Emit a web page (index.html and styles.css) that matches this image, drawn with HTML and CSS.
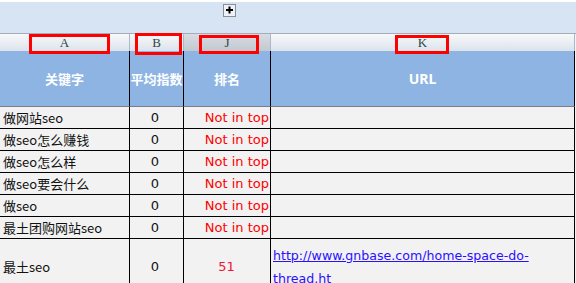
FILE: index.html
```html
<!DOCTYPE html>
<html lang="zh">
<head>
<meta charset="utf-8">
<title>关键字排名</title>
<link rel="stylesheet" href="styles.css">
</head>
<body>
<div class="sheet">
  <div class="band">
    <div></div><div></div>
    <div class="band-j">
      <svg class="expander" width="13" height="13" viewBox="0 0 13 13">
        <rect x="0.5" y="0.5" width="12" height="12" fill="#eef2f8" stroke="#8a8f96"/>
        <rect x="3" y="5" width="7" height="2" fill="#000"/>
        <rect x="5.5" y="2.5" width="2" height="7" fill="#000"/>
      </svg>
    </div>
    <div></div>
  </div>
  <div class="colheads">
    <div class="ch">A</div>
    <div class="ch">B</div>
    <div class="ch sel">J</div>
    <div class="ch">K</div>
  </div>
  <div class="grid">
    <div class="th">关键字</div>
    <div class="th">平均指数</div>
    <div class="th">排名</div>
    <div class="th th-url">URL</div>

    <div class="td kw">做网站seo</div>
    <div class="td num">0</div>
    <div class="td rank">Not in top</div>
    <div class="td url"></div>

    <div class="td kw">做seo怎么赚钱</div>
    <div class="td num">0</div>
    <div class="td rank">Not in top</div>
    <div class="td url"></div>

    <div class="td kw">做seo怎么样</div>
    <div class="td num">0</div>
    <div class="td rank">Not in top</div>
    <div class="td url"></div>

    <div class="td kw">做seo要会什么</div>
    <div class="td num">0</div>
    <div class="td rank">Not in top</div>
    <div class="td url"></div>

    <div class="td kw">做seo</div>
    <div class="td num">0</div>
    <div class="td rank">Not in top</div>
    <div class="td url"></div>

    <div class="td kw">最土团购网站seo</div>
    <div class="td num">0</div>
    <div class="td rank">Not in top</div>
    <div class="td url"></div>

    <div class="td kw">最土seo</div>
    <div class="td num">0</div>
    <div class="td rank found">51</div>
    <div class="td url link-cell"><a href="#">http://www.gnbase.com/home-space-do-thread.ht</a></div>
  </div>
  <span class="mark mark-a"></span>
  <span class="mark mark-b"></span>
  <span class="mark mark-j"></span>
  <span class="mark mark-k"></span>
</div>
</body>
</html>
```

FILE: styles.css
```css
html, body {
  margin: 0;
  padding: 0;
  background: #ffffff;
}

.sheet {
  position: relative;
  width: 576px;
  height: 283px;
  overflow: hidden;
  background: #f2f2f2;
}

.band {
  display: grid;
  grid-template-columns: 130px 54px 87px 305px;
  height: 31px;
  border-top: 2px solid #ffffff;
  border-left: 1px solid #9aa3ad;
  background: #d7e4f4;
  margin-left: -1px;
  padding-left: 1px;
}

.band-j {
  display: flex;
  justify-content: center;
  padding-top: 2px;
  padding-left: 1px;
}

.expander {
  display: block;
}

.colheads {
  display: grid;
  grid-template-columns: 130px 54px 87px 304px;
  height: 17px;
  border-top: 1px solid #a3acb8;
  background: #f2f4f7;
}

.ch {
  display: flex;
  align-items: center;
  justify-content: center;
  border-right: 1px solid #a9b9cb;
  background: linear-gradient(#f7f9fb, #dde3eb);
  font-family: "Liberation Serif", "DejaVu Serif", serif;
  font-size: 13px;
  color: #2b4545;
  padding-top: 1px;
  box-sizing: border-box;
}

.ch.sel {
  background: linear-gradient(#d8dce3, #c2c8d1);
}

.grid {
  display: grid;
  grid-template-columns: 130px 54px 87px 304px;
  grid-template-rows: 56px repeat(6, 22px) 56px;
}

.th {
  box-sizing: border-box;
  background: #8db4e2;
  border-right: 1px solid #000000;
  border-bottom: 1px solid #7a7f86;
  display: flex;
  align-items: center;
  justify-content: center;
  color: #ffffff;
  font-family: "Noto Sans CJK SC", "Noto Sans", sans-serif;
  font-weight: bold;
  font-size: 13px;
  white-space: nowrap;
}

.th-url {
  font-family: "Noto Sans", "Noto Sans CJK SC", sans-serif;
  font-size: 14px;
}

.td {
  box-sizing: border-box;
  border-right: 1px solid #000000;
  border-bottom: 1px solid #000000;
  background: #f2f2f2;
  display: flex;
  align-items: center;
  font-family: "DejaVu Sans", "Noto Sans CJK SC", sans-serif;
  font-size: 13px;
  color: #111111;
  white-space: nowrap;
}

.td.kw {
  font-family: "Noto Sans CJK SC", sans-serif;
  padding-left: 3px;
}

.td.num {
  justify-content: center;
  padding-right: 3px;
}

.td.rank {
  justify-content: flex-end;
  padding-right: 1px;
  color: #ff0000;
}

.td.rank.found {
  justify-content: center;
  color: #ee1438;
}

.td.url {
  padding-left: 2px;
}

.td.link-cell {
  white-space: normal;
}

.td.link-cell a {
  color: #2a10ff;
  text-decoration: underline;
  line-height: 23px;
  font-size: 12.6px;
}

.mark {
  position: absolute;
  border: 3px solid #ff0000;
  box-sizing: border-box;
}

.mark-a {
  left: 29px;
  top: 34px;
  width: 81px;
  height: 20px;
}

.mark-b {
  left: 135px;
  top: 33px;
  width: 47px;
  height: 22px;
}

.mark-j {
  left: 199px;
  top: 35px;
  width: 60px;
  height: 19px;
}

.mark-k {
  left: 395px;
  top: 35px;
  width: 54px;
  height: 19px;
}
```
